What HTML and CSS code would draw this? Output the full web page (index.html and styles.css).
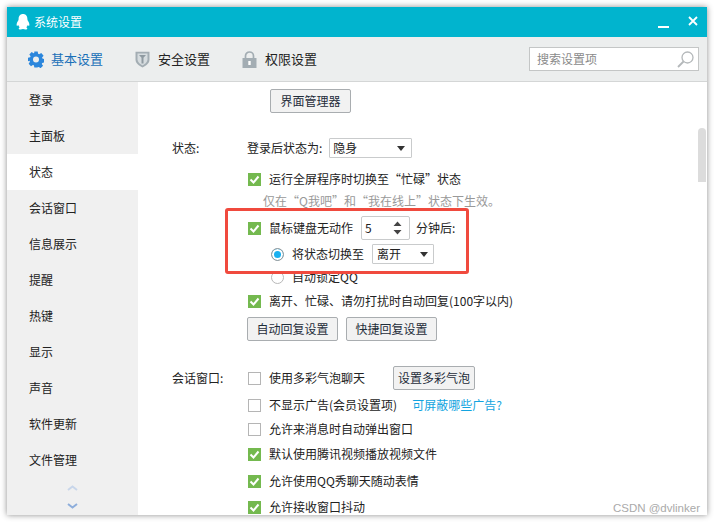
FILE: index.html
```html
<!DOCTYPE html>
<html lang="zh-CN">
<head>
<meta charset="utf-8">
<title>系统设置</title>
<link rel="stylesheet" href="styles.css">
</head>
<body>
<div class="window">
  <header class="titlebar">
    <svg class="qq" width="14" height="16" viewBox="0 0 14 16"><path d="M7 0C4 0 2.6 2.3 2.6 5 2.6 5.6 2.5 6.2 2 7 1 8.4.4 10 .7 11.400c.2.600.8.400 1.500-.5.300 1 .8 1.800 1.500 2.400C2.800 13.800 2.500 14.400 2.900 15 3.400 15.700 5.500 15.600 7 15.100 8.500 15.600 10.600 15.700 11.100 15 11.500 14.400 11.200 13.800 10.300 13.300 11 12.700 11.500 11.900 11.800 10.900c.7.900 1.300 1.100 1.500.5C13.600 10 13 8.400 12 7 11.500 6.200 11.400 5.600 11.400 5 11.400 2.300 10 0 7 0Z" fill="#fff"/></svg>
    <span class="title">系统设置</span>
    <svg class="win-btn min" width="11" height="2" viewBox="0 0 11 2"><rect width="11" height="2" fill="#fff"/></svg>
    <svg class="win-btn close" width="10" height="10" viewBox="0 0 10 10"><path d="M1 1l8 8M9 1l-8 8" stroke="#fff" stroke-width="1.800" fill="none"/></svg>
  </header>
  <nav class="toolbar">
    <a class="tab active">
      <svg width="16" height="17" viewBox="0 0 24 24"><path fill="#2b86dc" fill-rule="evenodd" d="M9.500 0h5l.7 3.400 1.500.7L19.900 2.200l3.500 4-2.300 2.700.5 1.500 3 1.100v5l-3.300.6-.6 1.500 1.900 2.800-3.700 3.600-2.800-1.900-1.500.6L14 24H9.500l-.7-3.300-1.500-.6-2.800 1.900-3.500-3.700 1.900-2.800-.6-1.500L0 14.500v-5l3.300-.7.600-1.500L2 4.500l3.500-3.600 2.800 1.900 1-.4ZM12 7.500a4.500 4.500 0 1 0 0 9 4.500 4.500 0 0 0 0-9Z"/></svg>
      <span>基本设置</span>
    </a>
    <a class="tab">
      <svg width="15" height="17" viewBox="0 0 15 17"><path d="M.5.800h14v8c0 3.600-3.500 6-7 7.700-3.500-1.700-7-4.100-7-7.700Z" fill="#a3adb3"/><path d="M2.500 2.600h10v6c0 2.600-2.500 4.500-5 5.800-2.500-1.300-5-3.200-5-5.800Z" fill="#d6dcdf"/><path d="M4 4h7l-2.500 2.800v5.700h-2V6.800Z" fill="#8f9aa1"/></svg>
      <span>安全设置</span>
    </a>
    <a class="tab">
      <svg width="15" height="17" viewBox="0 0 15 17"><path d="M3.500 8V5a4 4 0 0 1 8 0v3" fill="none" stroke="#a3adb3" stroke-width="1.700"/><rect x=".5" y="7" width="14" height="10" fill="#a3adb3"/><rect x="6.300" y="10" width="2.400" height="4" fill="#fff"/></svg>
      <span>权限设置</span>
    </a>
    <div class="search">
      <span>搜索设置项</span>
      <svg width="17" height="17" viewBox="0 0 17 17"><circle cx="10.500" cy="6.500" r="5.500" fill="none" stroke="#b4b8ba" stroke-width="1.300"/><path d="M6.500 10.500L1 16" stroke="#b4b8ba" stroke-width="1.800"/></svg>
    </div>
  </nav>
  <div class="body">
    <aside class="sidebar">
      <div class="side-item">登录</div>
      <div class="side-item">主面板</div>
      <div class="side-item selected">状态</div>
      <div class="side-item">会话窗口</div>
      <div class="side-item">信息展示</div>
      <div class="side-item">提醒</div>
      <div class="side-item">热键</div>
      <div class="side-item">显示</div>
      <div class="side-item">声音</div>
      <div class="side-item">软件更新</div>
      <div class="side-item">文件管理</div>
      <div class="arrows">
        <svg width="11" height="6" viewBox="0 0 11 6"><path d="M1 5l4.500-3.500L10 5" fill="none" stroke="#c8d6ea" stroke-width="2"/></svg>
        <svg width="11" height="6" viewBox="0 0 11 6"><path d="M1 1l4.500 3.500L10 1" fill="none" stroke="#8eaedb" stroke-width="2"/></svg>
      </div>
    </aside>
    <main class="content">
      <div class="top-btn"><button class="btn">界面管理器</button></div>

      <section class="group status-group">
        <div class="label">状态:</div>
        <div class="fields">
          <div class="row login-row">
            <span>登录后状态为:</span>
            <div class="select s-login"><span>隐身</span><i class="caret"></i></div>
          </div>
          <div class="row r-fullscreen"><i class="check on"></i><span>运行全屏程序时切换至“忙碌”状态</span></div>
          <div class="row hint">仅在“Q我吧”和“我在线上”状态下生效。</div>
          <div class="row r-idle">
            <i class="check on"></i><span>鼠标键盘无动作</span>
            <div class="spinner"><span>5</span>
              <svg width="9" height="18" viewBox="0 0 9 18"><path d="M.5 7L4.500 2.500l4 4.500ZM.5 11l4 4.500 4-4.500Z" fill="#444"/></svg>
            </div>
            <span>分钟后:</span>
          </div>
          <div class="row sub r-switch">
            <i class="radio on"></i><span>将状态切换至</span>
            <div class="select s-away"><span>离开</span><i class="caret"></i></div>
          </div>
          <div class="row sub r-lock"><i class="radio"></i><span>自动锁定QQ</span></div>
          <div class="row r-reply"><i class="check on"></i><span>离开、忙碌、请勿打扰时自动回复(100字以内)</span></div>
          <div class="btn-row">
            <button class="btn wide">自动回复设置</button>
            <button class="btn wide">快捷回复设置</button>
          </div>
        </div>
      </section>

      <section class="group chat-group">
        <div class="label">会话窗口:</div>
        <div class="fields">
          <div class="row r-bubble"><i class="check"></i><span class="bubble-text">使用多彩气泡聊天</span><button class="btn bubble">设置多彩气泡</button></div>
          <div class="row r-chat"><i class="check"></i><span>不显示广告(会员设置项)</span><a class="link">可屏蔽哪些广告?</a></div>
          <div class="row r-chat"><i class="check"></i><span>允许来消息时自动弹出窗口</span></div>
          <div class="row r-chat"><i class="check on"></i><span>默认使用腾讯视频播放视频文件</span></div>
          <div class="row r-chat"><i class="check on"></i><span>允许使用QQ秀聊天随动表情</span></div>
          <div class="row r-chat"><i class="check on"></i><span>允许接收窗口抖动</span></div>
        </div>
      </section>

      <div class="highlight"></div>
      <div class="scroll-thumb"></div>
      <div class="watermark">CSDN @dvlinker</div>
    </main>
  </div>
</div>
</body>
</html>
```

FILE: styles.css
```css
* { box-sizing: border-box; }
html, body { margin: 0; height: 100%; background: #fff; }
body {
  padding: 7px;
  font: 12px/16px "Noto Sans CJK SC", "Liberation Sans", sans-serif;
  color: #222;
  overflow: hidden;
}
.window {
  width: 700px;
  height: 508px;
  display: flex;
  flex-direction: column;
  background: #fff;
  box-shadow: 0 0 6px rgba(0,0,0,.45);
  overflow: hidden;
}
.titlebar {
  flex: 0 0 30px;
  background: #01b4ce;
  display: flex;
  align-items: center;
  padding-left: 9px;
  color: #fff;
}
.qq { margin-right: 4px; }
.title { flex: 1; }
.min { margin-right: 19px; margin-top: 10px; }
.close { margin-right: 9px; margin-top: -2px; }
.toolbar {
  flex: 0 0 45px;
  background: #eceeee;
  border-bottom: 1px solid #d4d6d6;
  display: flex;
  align-items: center;
  padding: 0 8px 0 21px;
}
.tab {
  display: flex;
  align-items: center;
  gap: 8px;
  margin-right: 32px;
  font-size: 13px;
  color: #222;
}
.tab.active { color: #1a70b8; gap: 7px; }
.search {
  margin-left: auto;
  width: 170px;
  height: 24px;
  background: #fff;
  border: 1px solid #c4c6c6;
  display: flex;
  align-items: center;
  justify-content: space-between;
  padding: 0 4px 0 7px;
  color: #8a8a8a;
}
.body { flex: 1; display: flex; min-height: 0; }
.sidebar {
  flex: 0 0 131px;
  background: #f0f0f0;
  display: flex;
  flex-direction: column;
}
.side-item {
  flex: 0 0 36px;
  padding-left: 22px;
  line-height: 36px;
  color: #222;
}
.side-item.selected { background: #fff; }
.arrows {
  display: flex;
  flex-direction: column;
  align-items: center;
  gap: 12px;
  margin-top: 7px;
}
.content { position: relative; flex: 1; overflow: hidden; padding-top: 7px; }
.top-btn { padding-left: 132px; }
.btn {
  font: inherit;
  height: 24px;
  width: 81px;
  padding: 0;
  border: 1px solid #a9adb0;
  border-radius: 2px;
  background: #f2f2f2;
  color: #1f2d3a;
  display: block;
}
.group { display: flex; }
.label { flex: 0 0 109px; padding-left: 34px; }
.fields { flex: 1; display: flex; flex-direction: column; }
.status-group { margin-top: 25px; }
.status-group .label { padding-top: 2px; }
.row { display: flex; align-items: center; height: 20px; }
.login-row span:first-child { margin-right: 7px; }
.check {
  width: 13px;
  height: 13px;
  flex: none;
  margin: 0 8px 0 1px;
  background: #fff;
  border: 1px solid #b5b5b5;
}
.check.on {
  border: 0;
  background: #74b94f url("data:image/svg+xml,%3Csvg xmlns='http://www.w3.org/2000/svg' viewBox='0 0 13 13'%3E%3Cpath d='M2.500 6.500l3 3 5-6' fill='none' stroke='%23fff' stroke-width='2'/%3E%3C/svg%3E") center/13px no-repeat;
}
.radio {
  width: 13px;
  height: 13px;
  flex: none;
  margin: 0 8px 0 24px;
  border-radius: 50%;
  border: 1px solid #b8b8b8;
  background: #fff;
}
.radio.on { background: #18b0f0; box-shadow: inset 0 0 0 2px #fff; border-color: #999; }
.select {
  height: 20px;
  border: 1px solid #c9cbcc;
  border-radius: 1px;
  background: #fff;
  display: flex;
  align-items: center;
  justify-content: space-between;
  padding: 0 6px 0 3px;
}
.s-login { width: 83px; }
.s-away { width: 62px; margin-left: 8px; padding-left: 4px; padding-right: 5px; }
.caret {
  width: 0; height: 0;
  border: 4.500px solid transparent;
  border-top: 5px solid #333;
  border-bottom: 0;
}
.r-fullscreen { margin-top: 11px; }
.hint { color: #999; padding-left: 16px; height: 20px; margin-top: 2px; }
.r-idle { height: 24px; margin-top: 5px; }
.spinner {
  width: 49px;
  height: 24px;
  margin: 0 6px 0 8px;
  border: 1px solid #c9cbcc;
  border-radius: 2px;
  display: flex;
  align-items: center;
  justify-content: space-between;
  padding: 0 7px 0 3px;
}
.r-switch { margin-top: 4px; }
.r-lock { margin-top: 3px; height: 20px; }
.r-reply { margin-top: 4px; }
.btn-row { display: flex; gap: 8px; margin-top: 6px; }
.btn.wide { width: 91px; }
.chat-group { margin-top: 25px; }
.chat-group .label { padding-top: 4px; }
.r-bubble { height: 24px; }
.bubble-text { width: 124px; }
.btn.bubble { width: 82px; }
.r-chat { height: 16px; }
.r-chat:nth-child(2) { margin-top: 7px; }
.r-chat:nth-child(3) { margin-top: 8px; }
.r-chat:nth-child(4) { margin-top: 9px; }
.r-chat:nth-child(5) { margin-top: 11px; }
.r-chat:nth-child(6) { margin-top: 10px; }
.link { margin-left: 15px; color: #12a4e0; }
.highlight {
  position: absolute;
  left: 87px;
  top: 126px;
  width: 244px;
  height: 66px;
  border: 3px solid #f04a3e;
  border-radius: 3px;
}
.scroll-thumb {
  position: absolute;
  right: 1px;
  top: 46px;
  width: 8px;
  height: 54px;
  background: #dcdcdc;
  border-radius: 4px 4px 0 0;
}
.watermark {
  position: absolute;
  right: 7px;
  bottom: 0;
  font: 11.5px/14px "Liberation Sans", sans-serif;
  color: #aaa;
}
```
